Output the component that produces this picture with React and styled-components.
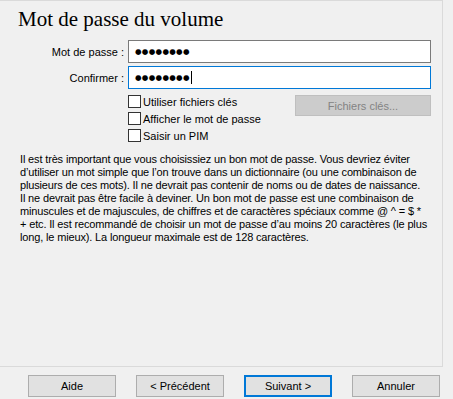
import React from "react";
import styled, { createGlobalStyle } from "styled-components";

const GlobalStyle = createGlobalStyle`
  html, body {
    margin: 0;
    padding: 0;
    background: #f0f0f0;
  }
  body {
    font-family: "Liberation Sans", Arial, sans-serif;
    font-size: 11px;
    color: #000;
  }
`;

const Window = styled.div`
  width: 453px;
  height: 399px;
  background: #f0f0f0;
  display: flex;
  flex-direction: column;
  overflow: hidden;
`;

const Panel = styled.div`
  box-sizing: border-box;
  width: 443px;
  height: 367px;
  border: 1px solid #dadada;
  border-left: none;
  padding-top: 6px;
  display: flex;
  flex-direction: column;
`;

const Title = styled.h1`
  margin: 0 0 0 18px;
  font-family: "Liberation Serif", "Times New Roman", serif;
  font-weight: normal;
  font-size: 21px;
  line-height: 24px;
`;

const FieldGrid = styled.div`
  display: grid;
  grid-template-columns: 128px 303px;
  row-gap: 3px;
  margin-top: 9px;
`;

const Label = styled.label`
  display: flex;
  align-items: center;
  justify-content: flex-end;
  padding-right: 4px;
  white-space: nowrap;
`;

const PasswordBox = styled.div`
  box-sizing: border-box;
  height: 23px;
  background: #fff;
  border: 1px solid ${(props) => (props.focused ? "#0078d7" : "#7a7a7a")};
  display: flex;
  align-items: center;
  padding-left: 6px;
`;

const Mask = styled.span`
  font-family: "DejaVu Sans", sans-serif;
  font-size: 7.5px;
  letter-spacing: 0.3px;
  line-height: 1;
`;

const Caret = styled.span`
  width: 1px;
  height: 13px;
  background: #000;
  margin-left: 1px;
`;

const OptionsRow = styled.div`
  display: grid;
  grid-template-columns: 128px 167px 136px;
  margin-top: 4px;
`;

const OptionList = styled.div`
  grid-column: 2;
  display: flex;
  flex-direction: column;
`;

const Option = styled.label`
  height: 17px;
  display: flex;
  align-items: center;
  gap: 2px;
  white-space: nowrap;
`;

const Box = styled.span`
  box-sizing: border-box;
  width: 13px;
  height: 13px;
  background: #fff;
  border: 1px solid #333;
  flex-shrink: 0;
`;

const Button = styled.button`
  box-sizing: border-box;
  width: ${(props) => props.width || 88}px;
  height: ${(props) => props.height || 22}px;
  margin: 0;
  padding: 0;
  font-family: "Liberation Sans", Arial, sans-serif;
  font-size: 11px;
  color: ${(props) => (props.disabled ? "#838383" : "#000")};
  background: ${(props) => (props.disabled ? "#cccccc" : "#e1e1e1")};
  border: ${(props) =>
    props.primary
      ? "2px solid #0078d7"
      : props.disabled
      ? "1px solid #bfbfbf"
      : "1px solid #adadad"};
`;

const KeyfilesButton = styled(Button)`
  margin-top: 2px;
`;

const Paragraph = styled.p`
  margin: 9px 0 0 20px;
  line-height: 13px;
  letter-spacing: -0.15px;
  white-space: nowrap;
`;

const Footer = styled.div`
  display: flex;
  gap: 20px;
  padding: 8px 0 0 28px;
`;

const lines = [
  "Il est très important que vous choisissiez un bon mot de passe. Vous devriez éviter",
  "d’utiliser un mot simple que l’on trouve dans un dictionnaire (ou une combinaison de",
  "plusieurs de ces mots). Il ne devrait pas contenir de noms ou de dates de naissance.",
  "Il ne devrait pas être facile à deviner. Un bon mot de passe est une combinaison de",
  "minuscules et de majuscules, de chiffres et de caractères spéciaux comme @ ^ = $ *",
  "+ etc. Il est recommandé de choisir un mot de passe d’au moins 20 caractères (le plus",
  "long, le mieux). La longueur maximale est de 128 caractères.",
];

const App = () => {
  return (
    <>
      <GlobalStyle />
      <Window>
        <Panel>
          <Title>Mot de passe du volume</Title>
          <FieldGrid>
            <Label>Mot de passe :</Label>
            <PasswordBox>
              <Mask>●●●●●●●●</Mask>
            </PasswordBox>
            <Label>Confirmer :</Label>
            <PasswordBox focused>
              <Mask>●●●●●●●●</Mask>
              <Caret />
            </PasswordBox>
          </FieldGrid>
          <OptionsRow>
            <OptionList>
              <Option>
                <Box />
                Utiliser fichiers clés
              </Option>
              <Option>
                <Box />
                Afficher le mot de passe
              </Option>
              <Option>
                <Box />
                Saisir un PIM
              </Option>
            </OptionList>
            <KeyfilesButton disabled width={136} height={21}>
              Fichiers clés...
            </KeyfilesButton>
          </OptionsRow>
          <Paragraph>
            {lines.map((line, i) => (
              <React.Fragment key={i}>
                {line}
                {i < lines.length - 1 && <br />}
              </React.Fragment>
            ))}
          </Paragraph>
        </Panel>
        <Footer>
          <Button>Aide</Button>
          <Button>&lt; Précédent</Button>
          <Button primary>Suivant &gt;</Button>
          <Button>Annuler</Button>
        </Footer>
      </Window>
    </>
  );
};

export default App;
